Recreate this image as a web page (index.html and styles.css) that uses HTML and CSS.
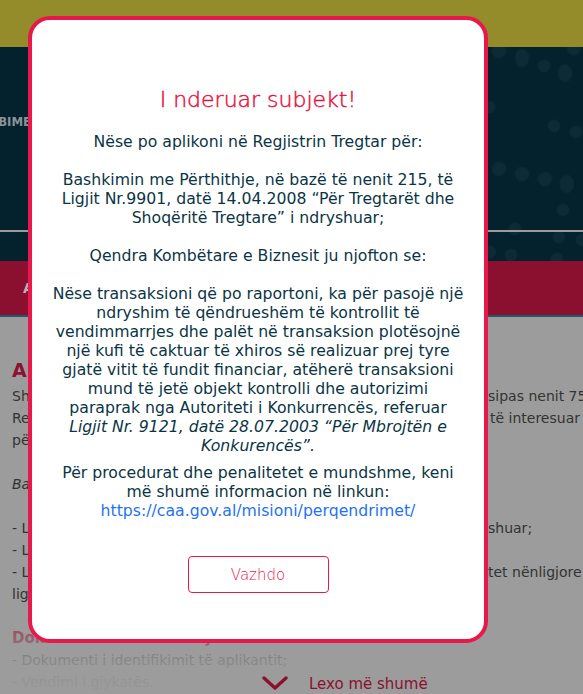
FILE: index.html
```html
<!DOCTYPE html>
<html lang="sq">
<head>
<meta charset="utf-8">
<title>Qendra Kombëtare e Biznesit</title>
<link rel="stylesheet" href="styles.css">
</head>
<body>
<div class="page">
  <div class="topbar"></div>
  <header class="hero">
    <nav class="nav">
      <span class="nav-item">SHËRBIMET</span>
      <span class="nav-item">LEGJISLACIONI</span>
    </nav>
    <div class="hero-rule"></div>
    <div class="hero-foot"></div>
  </header>
  <div class="tabs"><span class="tab">APLIKO ONLINE</span></div>
  <div class="teal-line"></div>
  <main class="content">
    <h1 class="art-title">Aplikimi për bashkimin</h1>
    <div class="row"><span class="l">Shoqëritë tregtare që kryejnë bashkimin,</span><span class="r">sipas nenit 75 të ligjit</span></div>
    <div class="row"><span class="l">Regjistrimi bëhet me kërkesë të subjektit</span><span class="r r2">të interesuar të</span></div>
    <div class="row"><span class="l">për regjistrimin e ndryshimeve.</span></div>
    <div class="row blank"></div>
    <div class="row"><span class="l it">Baza ligjore:</span></div>
    <div class="row blank"></div>
    <div class="row"><span class="l">- Ligji nr. 9901, datë 14.04.2008, i ndry</span><span class="r">shuar;</span></div>
    <div class="row"><span class="l">- Ligji nr. 131/2015 “Për QKB”;</span></div>
    <div class="row"><span class="l">- Ligji nr. 9121/2003 dhe ak</span><span class="r">tet nënligjore në zbatim të</span></div>
    <div class="row"><span class="l">ligjit.</span></div>
    <div class="row blank"></div>
    <h2 class="art-sub">Dokumentacioni i nevojshëm:</h2>
    <div class="row"><span class="l">- Dokumenti i identifikimit të aplikantit;</span></div>
    <div class="row"><span class="l">- Vendimi i gjykatës.</span></div>
    <div class="readmore">
      <svg class="chev" width="26" height="14" viewBox="0 0 26 14" aria-hidden="true"><path d="M2 2 L13 12 L24 2" fill="none" stroke="#8b1030" stroke-width="3.4" stroke-linecap="round" stroke-linejoin="round"/></svg>
      <span class="more">Lexo më shumë</span>
    </div>
  </main>

  <div class="modal" role="dialog">
    <h2 class="modal-title">I nderuar subjekt!</h2>
    <p class="msg">Nëse po aplikoni në Regjistrin Tregtar për:<br><br>Bashkimin me Përthithje, në bazë të nenit 215, të<br>Ligjit Nr.9901, datë 14.04.2008 “Për Tregtarët dhe<br>Shoqëritë Tregtare” i ndryshuar;<br><br>Qendra Kombëtare e Biznesit ju njofton se:<br><br>Nëse transaksioni që po raportoni, ka për pasojë një<br>ndryshim të qëndrueshëm të kontrollit të<br>vendimmarrjes dhe palët në transaksion plotësojnë<br>një kufi të caktuar të xhiros së realizuar prej tyre<br>gjatë vitit të fundit financiar, atëherë transaksioni<br>mund të jetë objekt kontrolli dhe autorizimi<br>paraprak nga Autoriteti i Konkurrencës, referuar<br><em>Ligjit Nr. 9121, datë 28.07.2003 “Për Mbrojtën e<br>Konkurencës”.</em></p>
    <p class="msg msg2">Për procedurat dhe penalitetet e mundshme, keni<br>më shumë informacion në linkun:<br><a class="link" href="#">https://caa.gov.al/misioni/perqendrimet/</a></p>
    <button class="btn" type="button">Vazhdo</button>
  </div>
</div>
</body>
</html>
```
FILE: styles.css
```css
html, body {
  margin: 0;
  padding: 0;
}
body {
  width: 583px;
  height: 694px;
  overflow: hidden;
  background: #9c9c9c;
  font-family: "DejaVu Sans", sans-serif;
}
.page {
  position: relative;
  width: 583px;
  height: 694px;
  overflow: hidden;
}
.topbar {
  height: 47px;
  background: #948b2b;
}
.hero {
  background-color: #03222e;
  background-image:
    radial-gradient(circle 8px at 499px 4px, #0d2b36 75%, rgba(3,34,46,0) 100%),
    radial-gradient(ellipse 8px 10px at 522px 11px, #0d2b36 75%, rgba(3,34,46,0) 100%),
    radial-gradient(circle 7px at 544px 19px, #0d2b36 75%, rgba(3,34,46,0) 100%),
    radial-gradient(ellipse 8px 10px at 565px 26px, #0d2b36 75%, rgba(3,34,46,0) 100%),
    radial-gradient(circle 8px at 574px 1px, #0d2b36 75%, rgba(3,34,46,0) 100%),
    radial-gradient(circle 7px at 489px 60px, #0d2b36 75%, rgba(3,34,46,0) 100%),
    radial-gradient(circle 7px at 554px 79px, #0d2b36 75%, rgba(3,34,46,0) 100%),
    radial-gradient(circle 7px at 576px 85px, #0d2b36 75%, rgba(3,34,46,0) 100%),
    radial-gradient(circle 8px at 499px 122px, #0d2b36 75%, rgba(3,34,46,0) 100%),
    radial-gradient(circle 8px at 522px 127px, #0d2b36 75%, rgba(3,34,46,0) 100%),
    radial-gradient(circle 8px at 545px 132px, #0d2b36 75%, rgba(3,34,46,0) 100%),
    radial-gradient(ellipse 8px 10px at 567px 137px, #0d2b36 75%, rgba(3,34,46,0) 100%),
    radial-gradient(circle 7px at 563px 163px, #0d2b36 75%, rgba(3,34,46,0) 100%),
    radial-gradient(circle 7px at 515px 182px, #0d2b36 75%, rgba(3,34,46,0) 100%),
    radial-gradient(circle 7px at 559px 190px, #0d2b36 75%, rgba(3,34,46,0) 100%),
    radial-gradient(circle 7px at 582px 193px, #0d2b36 75%, rgba(3,34,46,0) 100%),
    radial-gradient(circle 7px at 490px 205px, #0d2b36 75%, rgba(3,34,46,0) 100%),
    radial-gradient(circle 7px at 511px 208px, #0d2b36 75%, rgba(3,34,46,0) 100%),
    radial-gradient(circle 7px at 557px 212px, #0d2b36 75%, rgba(3,34,46,0) 100%);
}
.nav {
  height: 183px;
  box-sizing: border-box;
  display: flex;
  gap: 40px;
  align-items: flex-start;
  padding-top: 67px;
  margin-left: -37px;
}
.nav-item {
  font-family: "DejaVu Sans Condensed", "DejaVu Sans", sans-serif;
  font-weight: bold;
  font-size: 13px;
  line-height: 16px;
  color: #8b9397;
  white-space: nowrap;
}
.hero-rule {
  height: 2px;
  background: #9b9b9b;
}
.hero-foot {
  height: 29px;
}
.tabs {
  height: 54px;
  background: #8b0f2e;
  display: flex;
  align-items: center;
  padding-left: 23px;
}
.tab {
  font-weight: bold;
  font-size: 14px;
  color: #bdb3b7;
  white-space: nowrap;
}
.teal-line {
  height: 2px;
  background: #1d5a6d;
}
.content {
  position: relative;
  height: 377px;
  padding: 40px 0 0 12px;
  box-sizing: border-box;
  color: #333333;
}
.art-title {
  margin: 0 0 2px;
  font-size: 19px;
  line-height: 26px;
  font-weight: bold;
  color: #8b1233;
  white-space: nowrap;
}
.art-sub {
  margin: 0;
  font-size: 15px;
  line-height: 22px;
  font-weight: bold;
  color: #8b1233;
  white-space: nowrap;
}
.row {
  display: grid;
  grid-template-columns: 476px auto;
  height: 22px;
  font-size: 14px;
  line-height: 22px;
  white-space: nowrap;
}
.row .l {
  overflow: hidden;
}
.row .it {
  font-style: italic;
}
.row .r2 {
  padding-left: 2px;
}
.readmore {
  position: absolute;
  left: 0;
  right: 0;
  bottom: 0;
  height: 94px;
  display: flex;
  align-items: flex-end;
  gap: 21px;
  padding-left: 262px;
  box-sizing: border-box;
  background: linear-gradient(to bottom,
    rgba(156,156,156,0) 0%,
    rgba(156,156,156,0.55) 38%,
    rgba(156,156,156,0.78) 62%,
    rgba(156,156,156,0.92) 84%,
    rgba(156,156,156,0.95) 100%);
}
.chev {
  margin-bottom: 4px;
}
.more {
  font-size: 15px;
  line-height: 20px;
  color: #8b1030;
  white-space: nowrap;
}
.modal {
  position: absolute;
  top: 16px;
  left: 28px;
  width: 460px;
  height: 627px;
  box-sizing: border-box;
  border: 4px solid #e9184b;
  border-radius: 22px;
  background: #ffffff;
  padding: 66px 8px 0;
  text-align: center;
}
.modal-title {
  margin: 0 0 18px;
  font-size: 22px;
  line-height: 28px;
  font-weight: 300;
  color: #e5123f;
  -webkit-text-stroke: 0.45px #e5123f;
}
.msg {
  margin: 0;
  font-size: 15.7px;
  line-height: 19px;
  color: #0b3545;
  white-space: nowrap;
}
.msg2 {
  margin-top: 8px;
}
.link {
  color: #1f72f2;
  text-decoration: none;
}
.btn {
  display: block;
  margin: 36px auto 0;
  width: 141px;
  height: 37px;
  border: 1px solid #e9184b;
  border-radius: 4px;
  background: #ffffff;
  color: #e9184b;
  font-family: "DejaVu Sans", sans-serif;
  font-size: 15px;
  font-weight: 300;
}
```
